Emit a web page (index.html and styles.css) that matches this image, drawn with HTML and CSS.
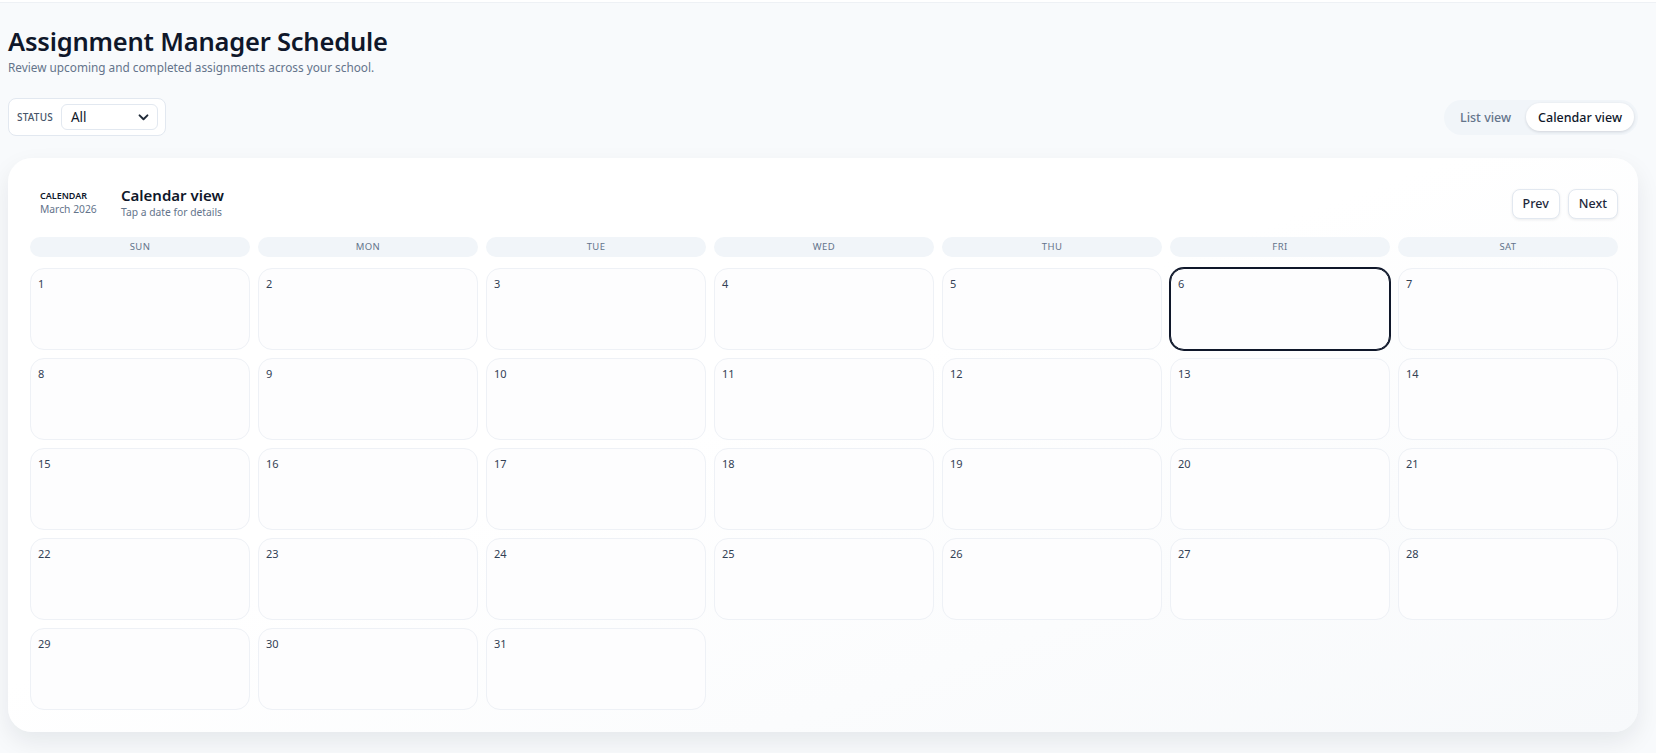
FILE: index.html
```html
<!DOCTYPE html>
<html lang="en">
<head>
<meta charset="utf-8">
<title>Assignment Manager Schedule</title>
<link rel="stylesheet" href="styles.css">
</head>
<body>
<div class="page">
  <header class="page-head">
    <h1 class="title">Assignment Manager Schedule</h1>
    <p class="subtitle">Review upcoming and completed assignments across your school.</p>
  </header>

  <div class="toolbar">
    <div class="filter">
      <span class="filter-label">STATUS</span>
      <div class="select">
        <span>All</span>
        <svg class="chev" width="11" height="7" viewBox="0 0 12 8"><path d="M1.5 1.5 L6 6 L10.5 1.5" fill="none" stroke="#1f2937" stroke-width="2.2" stroke-linecap="round" stroke-linejoin="round"/></svg>
      </div>
    </div>
    <div class="toggle">
      <button class="toggle-btn">List view</button>
      <button class="toggle-btn active">Calendar view</button>
    </div>
  </div>

  <section class="card">
    <div class="card-head">
      <div class="month">
        <div class="month-label">CALENDAR</div>
        <div class="month-name">March 2026</div>
      </div>
      <div class="card-title">
        <h2>Calendar view</h2>
        <p>Tap a date for details</p>
      </div>
      <div class="nav">
        <button class="nav-btn">Prev</button>
        <button class="nav-btn">Next</button>
      </div>
    </div>

    <div class="grid">
      <div class="dow">SUN</div><div class="dow">MON</div><div class="dow">TUE</div><div class="dow">WED</div><div class="dow">THU</div><div class="dow">FRI</div><div class="dow">SAT</div>
    </div>
    <div class="grid days">
      <div class="day"><span>1</span></div>
      <div class="day"><span>2</span></div>
      <div class="day"><span>3</span></div>
      <div class="day"><span>4</span></div>
      <div class="day"><span>5</span></div>
      <div class="day today"><span>6</span></div>
      <div class="day"><span>7</span></div>
      <div class="day"><span>8</span></div>
      <div class="day"><span>9</span></div>
      <div class="day"><span>10</span></div>
      <div class="day"><span>11</span></div>
      <div class="day"><span>12</span></div>
      <div class="day"><span>13</span></div>
      <div class="day"><span>14</span></div>
      <div class="day"><span>15</span></div>
      <div class="day"><span>16</span></div>
      <div class="day"><span>17</span></div>
      <div class="day"><span>18</span></div>
      <div class="day"><span>19</span></div>
      <div class="day"><span>20</span></div>
      <div class="day"><span>21</span></div>
      <div class="day"><span>22</span></div>
      <div class="day"><span>23</span></div>
      <div class="day"><span>24</span></div>
      <div class="day"><span>25</span></div>
      <div class="day"><span>26</span></div>
      <div class="day"><span>27</span></div>
      <div class="day"><span>28</span></div>
      <div class="day"><span>29</span></div>
      <div class="day"><span>30</span></div>
      <div class="day"><span>31</span></div>
    </div>
  </section>
</div>
</body>
</html>
```

FILE: styles.css
```css
* { box-sizing: border-box; }
html, body { margin: 0; padding: 0; }
body {
  background: #f8fafc;
  font-family: "Noto Sans", "Open Sans", sans-serif;
  color: #0f172a;
  border-top: 2px solid #ffffff;
}
.page {
  border-top: 1px solid #eef1f5;
  padding: 21px 18px 40px 8px;
}
.page-head { margin: 0; }
.title {
  margin: 0;
  font-size: 25.5px;
  font-weight: 600;
  line-height: 34px;
  color: #0f172a;
  letter-spacing: -0.2px;
}
.subtitle {
  margin: 1px 0 0;
  font-size: 11.8px;
  line-height: 16px;
  color: #64748b;
}
.toolbar {
  display: flex;
  justify-content: space-between;
  align-items: center;
  margin-top: 23px;
}
.filter {
  display: flex;
  align-items: center;
  gap: 8px;
  background: #ffffff;
  border: 1px solid #e2e8f0;
  border-radius: 8px;
  padding: 5px 7px 5px 8px;
  height: 38px;
}
.filter-label {
  font-size: 10px;
  font-weight: 500;
  color: #475569;
  letter-spacing: 0.2px;
}
.select {
  width: 97px;
  height: 26px;
  border: 1px solid #e2e8f0;
  border-radius: 6px;
  display: flex;
  align-items: center;
  justify-content: space-between;
  padding: 0 8px 0 9px;
  font-size: 13.5px;
  color: #0f172a;
  background: #fff;
}
.chev { display: block; }
.toggle {
  display: flex;
  align-items: center;
  gap: 3px;
  background: #f1f5f9;
  border-radius: 999px;
  padding: 4px;
  height: 35px;
}
.toggle-btn {
  font-family: inherit;
  border: 0;
  background: transparent;
  border-radius: 999px;
  font-size: 12.5px;
  font-weight: 500;
  color: #64748b;
  padding: 0 12px;
  height: 28px;
  cursor: pointer;
}
.toggle-btn.active {
  background: #ffffff;
  color: #0f172a;
  box-shadow: 0 1px 3px rgba(15, 23, 42, 0.14);
}
.card {
  margin-top: 22px;
  background: linear-gradient(160deg, #ffffff 0%, #ffffff 45%, #f7f9fb 100%);
  border-radius: 24px;
  padding: 23px 20px 22px 22px;
  box-shadow: 0 10px 24px rgba(15, 23, 42, 0.08);
}
.card-head {
  display: flex;
  align-items: center;
  margin-bottom: 17px;
  padding: 4px 0 0;
}
.month {
  padding: 0 10px;
  width: 91px;
}
.month-label {
  font-size: 9px;
  font-weight: 600;
  color: #0f172a;
  line-height: 13px;
}
.month-name {
  font-size: 10.3px;
  color: #64748b;
  line-height: 15px;
}
.card-title h2 {
  margin: 0;
  font-size: 15px;
  font-weight: 600;
  line-height: 20px;
  color: #0f172a;
}
.card-title p {
  margin: 0;
  font-size: 10.3px;
  line-height: 15px;
  color: #64748b;
}
.nav {
  margin-left: auto;
  display: flex;
  gap: 8px;
  margin-top: 2px;
}
.nav-btn {
  font-family: inherit;
  font-size: 12.5px;
  font-weight: 500;
  color: #1e293b;
  background: #ffffff;
  border: 1px solid #e2e8f0;
  border-radius: 8px;
  height: 30px;
  padding: 0 10px;
  box-shadow: 0 1px 3px rgba(15, 23, 42, 0.08);
  cursor: pointer;
}
.grid {
  display: grid;
  grid-template-columns: repeat(7, 1fr);
  gap: 8px;
}
.dow {
  background: #f1f5f9;
  border-radius: 999px;
  height: 20px;
  font-size: 9.5px;
  line-height: 20px;
  text-align: center;
  color: #64748b;
  letter-spacing: 0.4px;
}
.days {
  margin-top: 11px;
}
.day {
  height: 82px;
  border: 1px solid #eef1f6;
  border-radius: 14px;
  background: #fdfdfe;
  padding: 7px 7px;
  font-size: 11px;
  color: #334155;
}
.day.today {
  border-color: #0f172a;
  box-shadow: 0 0 0 1px #0f172a;
}
```
